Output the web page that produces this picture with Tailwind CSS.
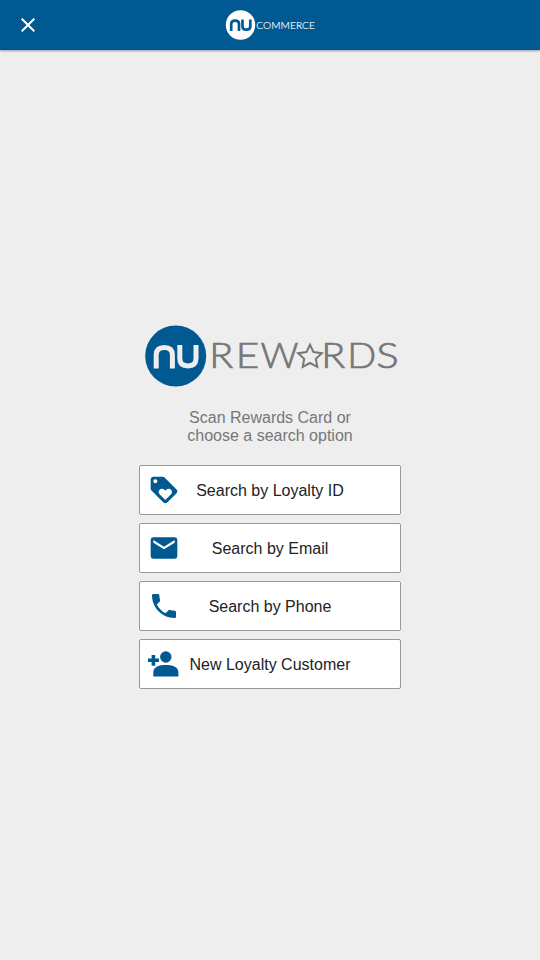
<!DOCTYPE html>
<html lang="en">
<head>
<meta charset="utf-8">
<title>NU Rewards</title>
<script src="https://cdn.jsdelivr.net/npm/@tailwindcss/browser@4"></script>
</head>
<body class="flex h-screen flex-col overflow-hidden bg-[#eeeeee] font-['Liberation_Sans',Arial,sans-serif]">
<header class="grid h-[50px] shrink-0 grid-cols-[1fr_90px_1fr] items-center bg-[#005991] shadow-[0_1px_2px_rgba(0,0,0,0.35)]">
  <button class="ml-4 size-6" aria-label="Close">
    <svg viewBox="0 0 24 24" class="size-6 fill-white"><path d="M19 6.41 17.59 5 12 10.59 6.41 5 5 6.41 10.59 12 5 17.59 6.41 19 12 13.41 17.59 19 19 17.59 13.41 12z"/></svg>
  </button>
  <svg viewBox="0 0 90 30" class="h-[30px] w-[90px]">
    <circle cx="15.500" cy="15" r="14.700" fill="#fff"/>
    <path d="M6.200 21V13.800C6.200 11.500 7.500 10.600 10.100 10.600S14 11.500 14 13.800V21M17.500 9.500V16.500C17.500 18.800 18.800 19.700 21.400 19.700S25.300 18.800 25.300 16.500V9.500" fill="none" stroke="#005991" stroke-width="2.700"/>
    <text x="31.300" y="18.500" font-family="Lato" font-size="9.600" font-weight="300" fill="#fff" stroke="#fff" stroke-width=".15" textLength="58.700" lengthAdjust="spacingAndGlyphs">COMMERCE</text>
  </svg>
  <span></span>
</header>
<main class="flex flex-1 flex-col items-center pt-[275px]">
  <svg viewBox="0 0 254 62" class="h-[62px] w-[254px] shrink-0 overflow-visible">
    <circle cx="32.700" cy="31" r="30.500" fill="#005991"/>
    <path d="M13.200 43.600V30C13.200 24.800 15.800 22.500 21.300 22.500S29.400 24.800 29.400 30V43.600M36.800 20V33.600C36.800 38.700 39.400 41 44.900 41S53 38.700 53 33.600V20" fill="none" stroke="#eee" stroke-width="5"/>
    <g font-family="Lato" font-size="35" font-weight="300" fill="#777" stroke="#777" stroke-width=".7">
      <text x="66.300" y="43" textLength="24" lengthAdjust="spacingAndGlyphs">R</text>
      <text x="92.800" y="43" textLength="23.500" lengthAdjust="spacingAndGlyphs">E</text>
      <text x="117.500" y="43" textLength="38" lengthAdjust="spacingAndGlyphs">W</text>
      <text x="178.300" y="43" textLength="24" lengthAdjust="spacingAndGlyphs">R</text>
      <text x="204.300" y="43" textLength="29" lengthAdjust="spacingAndGlyphs">D</text>
      <text x="233.300" y="43" textLength="22.500" lengthAdjust="spacingAndGlyphs">S</text>
    </g>
    <path d="M167 19.700 170.500 27.100 178.800 28.200 172.800 33.800 174.300 41.900 167 38 159.700 41.900 161.200 33.800 155.200 28.200 163.500 27.100z" fill="none" stroke="#777" stroke-width="2"/>
  </svg>
  <p class="mt-[22px] text-center text-base leading-[18px] text-[#777777]">Scan Rewards Card or<br>choose a search option</p>
  <div class="mt-5 flex w-[262px] flex-col gap-2 text-base text-[#222222]">
    <button class="grid h-[50px] place-items-center rounded-[2px] border border-[#999999] bg-white">
      <svg viewBox="0 0 24 24" class="col-start-1 row-start-1 ml-2 size-8 justify-self-start fill-[#005991]"><path d="m21.410 11.580-9-9C12.050 2.220 11.550 2 11 2H4c-1.100 0-2 .9-2 2v7c0 .55.22 1.050.59 1.420l9 9c.36.36.86.58 1.410.58s1.050-.22 1.410-.59l7-7c.37-.36.59-.86.59-1.410s-.23-1.060-.59-1.420zM5.500 7C4.670 7 4 6.330 4 5.500S4.670 4 5.500 4 7 4.670 7 5.500 6.330 7 5.500 7zm11.770 8.270L13 19.540l-4.270-4.270C8.280 14.810 8 14.190 8 13.500c0-1.380 1.120-2.500 2.500-2.500.69 0 1.320.28 1.770.74l.73.72.73-.73c.45-.45 1.080-.73 1.770-.73 1.380 0 2.500 1.120 2.500 2.500 0 .69-.28 1.320-.73 1.770z"/></svg>
      <span class="col-start-1 row-start-1 pt-0.5">Search by Loyalty ID</span>
    </button>
    <button class="grid h-[50px] place-items-center rounded-[2px] border border-[#999999] bg-white">
      <svg viewBox="0 0 24 24" class="col-start-1 row-start-1 ml-2 size-8 justify-self-start fill-[#005991]"><path d="M20 4H4c-1.100 0-1.990.9-1.990 2L2 18c0 1.100.9 2 2 2h16c1.100 0 2-.9 2-2V6c0-1.100-.9-2-2-2zm0 4-8 5-8-5V6l8 5 8-5v2z"/></svg>
      <span class="col-start-1 row-start-1 pt-0.5">Search by Email</span>
    </button>
    <button class="grid h-[50px] place-items-center rounded-[2px] border border-[#999999] bg-white">
      <svg viewBox="0 0 24 24" class="col-start-1 row-start-1 ml-2 size-8 justify-self-start fill-[#005991]"><path d="M6.620 10.790c1.440 2.830 3.760 5.140 6.590 6.590l2.200-2.200c.27-.27.67-.36 1.020-.24 1.120.37 2.330.57 3.570.57.55 0 1 .45 1 1V20c0 .55-.45 1-1 1-9.390 0-17-7.610-17-17 0-.55.45-1 1-1h3.500c.55 0 1 .45 1 1 0 1.250.2 2.450.57 3.570.11.35.03.74-.25 1.020l-2.200 2.200z"/></svg>
      <span class="col-start-1 row-start-1 pt-0.5">Search by Phone</span>
    </button>
    <button class="grid h-[50px] place-items-center rounded-[2px] border border-[#999999] bg-white">
      <svg viewBox="0 0 32 32" class="col-start-1 row-start-1 ml-2 size-8 justify-self-start fill-[#005991]"><circle cx="17.800" cy="9" r="5.700"/><path d="M5.300 28.500V24.500C5.300 18.500 11.500 17 17.800 17S30.400 18.500 30.400 24.500V28.500zM3.600 7H7.200V10.500H11V14H7.200V17.700H3.600V14H0V10.500H3.600z"/></svg>
      <span class="col-start-1 row-start-1 pt-0.5">New Loyalty Customer</span>
    </button>
  </div>
</main>
</body>
</html>
